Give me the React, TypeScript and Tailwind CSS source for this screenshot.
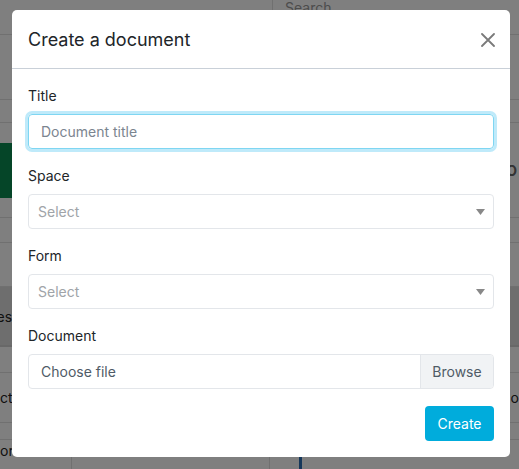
import React from "react";

const font = { fontFamily: "Inter, 'Noto Sans', sans-serif" };

function Caret() {
  return (
    <svg width="9" height="6" viewBox="0 0 9 6" className="shrink-0">
      <path d="M0 0h9L4.5 6z" fill="#888" />
    </svg>
  );
}

function SelectBox() {
  return (
    <div className="h-[35px] w-full flex items-center justify-between rounded border border-[#e3e6ea] bg-white pl-[9px] pr-[8px]">
      <span className="text-[14px] text-[#a0a4a8]">Select</span>
      <Caret />
    </div>
  );
}

function Field({ label, children }: { label: string; children: React.ReactNode }) {
  return (
    <div className="mb-[16px]">
      <div className="text-[14px] leading-[21px] text-[#212529] mb-[8px]">{label}</div>
      {children}
    </div>
  );
}

// dimmed app behind the modal
function Backdrop() {
  return (
    <div className="h-[469px] w-[519px] flex flex-col bg-white text-[#999] text-[14px]">
      <div className="h-[35px] flex border-b border-[#e0e0e0]">
        <div className="w-[273px] border-r border-[#e0e0e0]" />
        <div className="pl-[12px] leading-[16px]">Search</div>
      </div>
      <div className="h-[65px] border-b border-[#e0e0e0]" />
      <div className="h-[23px] border-b border-[#e0e0e0]" />
      <div className="h-[94px] flex flex-col pt-[20px]">
        <div className="flex items-center justify-between h-[55px]">
          <div className="h-[55px] w-[60px] bg-[#0a8a50]" />
          <div className="text-[#666] font-bold pr-[2px]">RO</div>
        </div>
      </div>
      <div className="h-[26px] border-y border-[#e0e0e0]" />
      <div className="h-[44px] border-b border-[#e0e0e0]" />
      <div className="h-[60px] flex items-center bg-[#dcdcdc] border-b-2 border-[#d0d0d0] text-[#222]">
        <span className="ml-[-28px]">Types</span>
      </div>
      <div className="h-[26px] border-b border-[#e0e0e0]" />
      <div className="h-[50px] flex items-center justify-between border-b border-[#e0e0e0] text-[#222]">
        <span>ct</span>
        <span>o</span>
      </div>
      <div className="h-[17px] border-b border-[#e0e0e0]" />
      <div className="flex-1 flex">
        <div className="w-[72px] border-r border-[#e0e0e0] flex items-start justify-between pr-[8px] text-[#222]">
          <span>orm</span>
          <span className="pt-[6px]">
            <Caret />
          </span>
        </div>
        <div className="w-[198px] border-r border-[#e0e0e0]" />
        <div className="w-[32px] border-r-[3px] border-[#2a6fb4]" />
      </div>
    </div>
  );
}

export default function App() {
  return (
    <div className="relative w-[519px] h-[469px] overflow-hidden" style={font}>
      <Backdrop />
      <div className="absolute inset-0 bg-[rgba(0,0,0,0.5)]">
        <div className="mt-[10px] ml-[12px] w-[498px] rounded-[5px] bg-white">
          <div className="flex items-center justify-between px-[16px] pt-[16px] pb-[15px] border-b border-[#c9d0d8]">
            <h1 className="text-[18px] leading-[27px] font-normal text-[#212529]">Create a document</h1>
            <svg width="14" height="14" viewBox="0 0 14 14" className="mr-[-1px]">
              <path d="M1 1l12 12M13 1L1 13" stroke="#7a7a7a" strokeWidth="1.8" strokeLinecap="round" />
            </svg>
          </div>
          <div className="px-[16px] pt-[16px] pb-[16px]">
            <Field label="Title">
              <div className="h-[35px] w-full flex items-center rounded border border-[#7fd6f2] ring-[3px] ring-[#bfeafa] px-[12px]">
                <span className="text-[14px] text-[#7b8590]">Document title</span>
              </div>
            </Field>
            <Field label="Space">
              <SelectBox />
            </Field>
            <Field label="Form">
              <SelectBox />
            </Field>
            <Field label="Document">
              <div className="h-[35px] w-full flex rounded border border-[#e3e6ea] overflow-hidden">
                <div className="flex-1 flex items-center px-[12px] text-[14px] text-[#4f5b66]">Choose file</div>
                <div className="w-[73px] flex items-center justify-center bg-[#f1f3f5] border-l border-[#e3e6ea] text-[14px] text-[#4f5b66]">
                  Browse
                </div>
              </div>
            </Field>
            <div className="flex justify-end pt-[1px]">
              <button className="h-[35px] w-[69px] rounded bg-[#00acdc] text-white text-[14px]">Create</button>
            </div>
          </div>
        </div>
      </div>
    </div>
  );
}
